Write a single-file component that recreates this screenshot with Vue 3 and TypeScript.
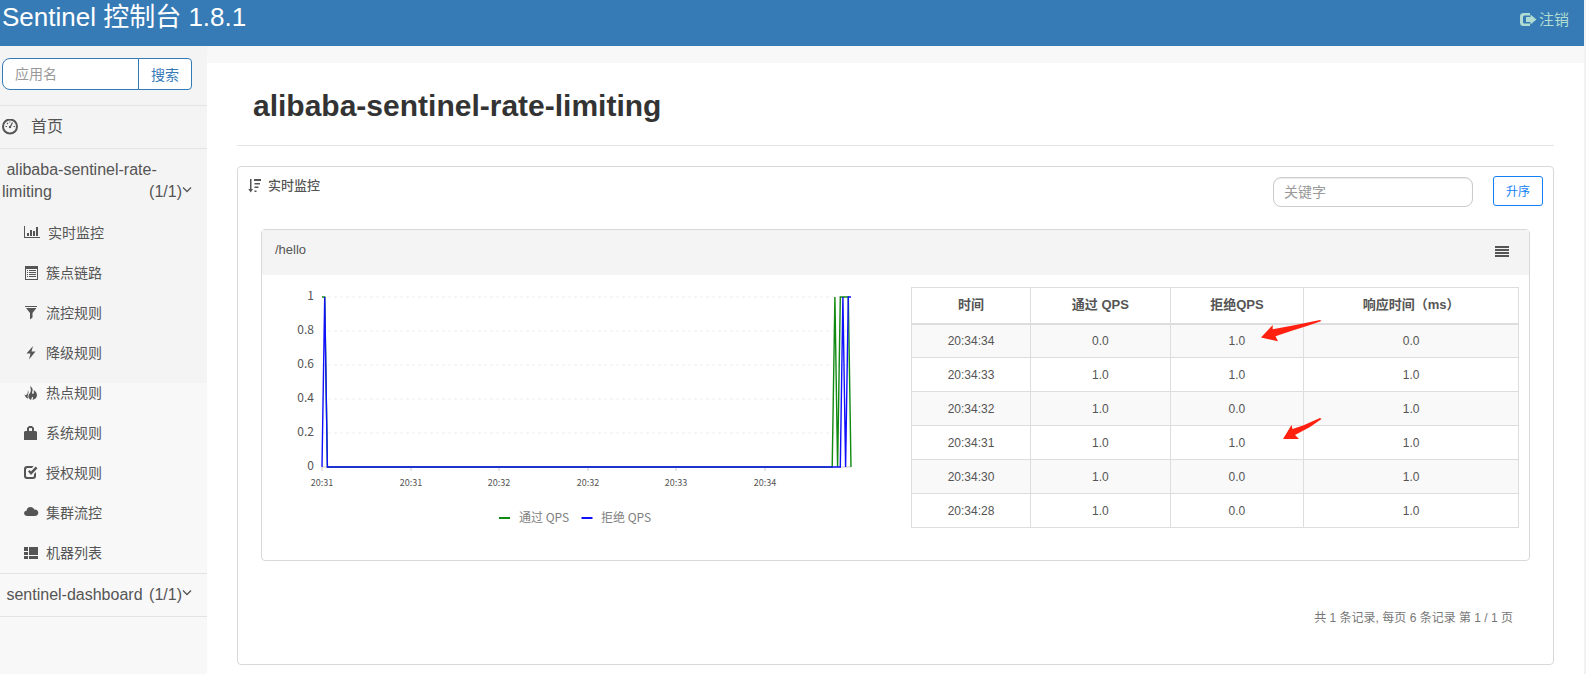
<script setup lang="ts">
import { ref } from 'vue'

interface MenuItem { label: string; icon: string; wide?: boolean }

const appFilter = ref('')
const keyword = ref('')

const menu: MenuItem[] = [
  { label: '实时监控', icon: 'M0 0h1v11h15v1H0zM3 7h2v3H3zM6 4h2v6H6zM9 5h2v5H9zM12 1h2v9h-2z', wide: true },
  { label: '簇点链路', icon: 'M1 0h13v14H1zM2 3v10h11V3zM3 4h1v1H3zM5 4h7v1H5zM3 6h1v1H3zM5 6h7v1H5zM3 8h1v1H3zM5 8h7v1H5zM3 10h1v1H3zM5 10h7v1H5z' },
  { label: '流控规则', icon: 'M1 0h12v1H1zM2 2h10.500L8.500 7v4.500L6 13.500V7z' },
  { label: '降级规则', icon: 'M9 0 2.500 7.500h4L5 13.500 11.500 5.500H7.500z' },
  { label: '热点规则', icon: 'M6 0C8.500 1.500 9.200 3.500 8.300 5.500 7.900 6.800 8.100 7.900 8.900 7.900 10 7.900 10.200 6 9.500 4c2.200 1.300 3.500 3.200 3.500 5.200 0 2.300-1.600 4-4.800 4.800 1.200-1.300 1-2.500 0-3.600C7.900 11.800 7.400 12.600 7 14 4.600 12.700 3.900 11 4.600 9.300c.6-1.500 2.200-2.700 2.200-4.800C6.900 2.800 6.600 1.400 6 0zM3.800 4c1.100 1.900.6 3.300.1 4.700-.4 1.400-.3 2.700.2 4C2.100 12 .8 10.600.5 8.300c.7 1 1.200 1.200 1.700.8C3.300 8.200 4.200 6.500 3.800 4z' },
  { label: '系统规则', icon: 'M3 5V2L5 0h3l2 2v3h2l1 1v8H0V6l1-1zM5 5h3V2.500L7.500 2h-2L5 2.500z' },
  { label: '授权规则', icon: 'M3 0h6.500L8 2H3.500Q2 2 2 3.500v6Q2 11 3.500 11h5q1.500 0 1.500-1.500V8l2-2v4q0 3-3 3H3q-3 0-3-3V3q0-3 3-3zM4 5.500l1.500-1.500L7 5.500 11.700.500 13.500 2.300 7 9z' },
  { label: '集群流控', icon: 'M3.500 10C1.200 10-.2 8.600.1 6.900.3 5.500 1.300 4.700 2.500 4.700 2.700 2.500 4.300 1 6.500 1c1.800 0 3.200 1 3.800 2.500 2.400-.3 4 1.200 4 3.200 0 1.900-1.400 3.300-3.300 3.300z' },
  { label: '机器列表', icon: 'M0 1h4v4H0zM5 1h9v8H5zM0 6h4v3H0zM0 10h4v3H0zM5 10h9v3H5z' },
]

const headers = ['时间', '通过 QPS', '拒绝QPS', '响应时间（ms）']
const rows = [
  ['20:34:34', '0.0', '1.0', '0.0'],
  ['20:34:33', '1.0', '1.0', '1.0'],
  ['20:34:32', '1.0', '0.0', '1.0'],
  ['20:34:31', '1.0', '1.0', '1.0'],
  ['20:34:30', '1.0', '0.0', '1.0'],
  ['20:34:28', '1.0', '0.0', '1.0'],
]

const plot = { left: 60, right: 589, top: 21, bottom: 191 }
const lastIndex = 197
const xAt = (i: number) => plot.left + (i * (plot.right - plot.left)) / lastIndex
const yAt = (v: number) => plot.bottom - v * (plot.bottom - plot.top)
const line = (points: number[][]) => points.map(([i, v]) => `${xAt(i).toFixed(1)},${yAt(v)}`).join(' ')

const passed = line([[0, 1], [1, 1], [2, 0], [190, 0], [191, 1], [192, 0], [193, 1], [196, 1], [197, 0]])
const blocked = line([[0, 0], [1, 1], [2, 0], [193, 0], [194, 1], [195, 0], [196, 1], [197, 1]])
const yTicks = [1, 0.8, 0.6, 0.4, 0.2, 0]
const xTicks = ['20:31', '20:31', '20:32', '20:32', '20:33', '20:34'].map((label, n) => ({ label, x: Math.round(xAt(n * 33)) }))
</script>

<template>
  <div class="page">
    <header class="topbar">
      <div class="brand">Sentinel 控制台 1.8.1</div>
      <a class="logout" href="#">
        <svg width="17" height="14" viewBox="0 0 17 14" aria-hidden="true">
          <path fill="currentColor" d="M3.500 0H10v2.500H4.500Q3 2.500 3 4v5q0 1.500 1.500 1.500H10V13H3.500Q0 13 0 9.500v-6Q0 0 3.500 0zM10.500 1.500l6 5-6 5V9H6V4h4.500z" />
        </svg>
        <span>注销</span>
      </a>
    </header>

    <div class="body">
      <nav class="sidebar">
        <form class="search" @submit.prevent>
          <input v-model="appFilter" type="text" placeholder="应用名" aria-label="应用名" />
          <button type="submit">搜索</button>
        </form>
        <a class="home" href="#">
          <svg width="17" height="16" viewBox="0 0 17 16" aria-hidden="true">
            <circle cx="8" cy="7.500" r="7" fill="none" stroke="currentColor" stroke-width="2" />
            <path d="M8 8.500 10.500 3.500M3.500 7.500h1.500M11.500 7.500h1.500M5 4l1 1M7.800 2.500v1" fill="none" stroke="currentColor" stroke-width="1.200" />
            <circle cx="8" cy="8" r="1.200" fill="currentColor" />
          </svg>
          <span>首页</span>
        </a>
        <a class="app" href="#">
          <span>&nbsp;alibaba-sentinel-rate-</span><wbr /><span>limiting</span>
          <span class="count">(1/1)<svg width="10" height="12" viewBox="0 0 10 12" aria-hidden="true"><path d="M1 2.500 5 6.500 9 2.500" fill="none" stroke="currentColor" stroke-width="1.300" /></svg></span>
        </a>
        <ul class="menu">
          <li v-for="item in menu" :key="item.label">
            <a href="#" :class="{ wide: item.wide }">
              <svg width="16" height="14" viewBox="0 0 16 14" aria-hidden="true">
                <path :d="item.icon" fill="currentColor" fill-rule="evenodd" />
              </svg>
              <span>{{ item.label }}</span>
            </a>
          </li>
        </ul>
        <a class="app ruled" href="#">
          <span>&nbsp;sentinel-dashboard</span>
          <span class="count">(1/1)<svg width="10" height="12" viewBox="0 0 10 12" aria-hidden="true"><path d="M1 2.500 5 6.500 9 2.500" fill="none" stroke="currentColor" stroke-width="1.300" /></svg></span>
        </a>
      </nav>

      <main class="main">
        <h1>alibaba-sentinel-rate-limiting</h1>
        <section class="card">
          <div class="card-head">
            <h2>
              <svg width="14" height="14" viewBox="0 0 14 14" aria-hidden="true">
                <path fill="currentColor" d="M2 0h1.500v10H5L2.700 13.500.3 10H2zM6 0h7v2H6zM6.500 4H12v1.500H6.500zM6.500 7.500h4V9h-4zM6.500 11.500h2V13h-2z" />
              </svg>
              <span>实时监控</span>
            </h2>
            <input v-model="keyword" type="text" placeholder="关键字" aria-label="关键字" />
            <button class="sort" type="button">升序</button>
          </div>

          <article class="metric">
            <div class="metric-head">
              <span>/hello</span>
              <button type="button" aria-label="菜单">
                <svg width="14" height="12" viewBox="0 0 14 12" aria-hidden="true">
                  <path fill="currentColor" d="M0 0h14v2H0zM0 3h14v2H0zM0 6h14v2H0zM0 9h14v2H0z" />
                </svg>
              </button>
            </div>
            <div class="metric-body">
              <svg class="chart" viewBox="0 0 649 284" role="img" aria-label="QPS">
                <g v-for="v in yTicks" :key="v">
                  <line v-if="v" :x1="plot.left" :x2="plot.right" :y1="yAt(v)" :y2="yAt(v)" class="grid" />
                  <text x="52" :y="yAt(v) + 3" class="ylabel">{{ v }}</text>
                </g>
                <line :x1="plot.left" :x2="plot.right" :y1="plot.bottom" :y2="plot.bottom" class="axis" />
                <g v-for="t in xTicks" :key="t.x">
                  <line :x1="t.x" :x2="t.x" y1="191" y2="195" class="axis" />
                  <text :x="t.x" y="210" class="xlabel">{{ t.label }}</text>
                </g>
                <polyline :points="passed" class="series passed" />
                <polyline :points="blocked" class="series blocked" />
                <path d="M237 242h11" class="key passed" />
                <text x="257" y="246" class="legend">通过 QPS</text>
                <path d="M319.500 242h11" class="key blocked" />
                <text x="339" y="246" class="legend">拒绝 QPS</text>
              </svg>
              <div class="table-wrap">
                <table>
                  <thead>
                    <tr><th v-for="h in headers" :key="h" scope="col">{{ h }}</th></tr>
                  </thead>
                  <tbody>
                    <tr v-for="r in rows" :key="r[0]"><td v-for="(c, n) in r" :key="n">{{ c }}</td></tr>
                  </tbody>
                </table>
                <svg class="arrow first" width="61" height="22" viewBox="0 0 61 22" aria-hidden="true">
                  <path fill="#ff2010" d="M0 17.500 11.700 5v4.200L32 5.500 59 0l1.500 1L46 6 30 11 14.500 16.300l2.500 5z" />
                </svg>
                <svg class="arrow second" width="39" height="22" viewBox="0 0 39 22" aria-hidden="true">
                  <path fill="#ff2010" d="M0 21 8.500 7l1 4L20 7.500 37 0l1.500 1L27 9 12 17l4 4z" />
                </svg>
              </div>
            </div>
          </article>
          <footer class="pager">共 1 条记录, 每页 6 条记录 第 1 / 1 页</footer>
        </section>
      </main>
    </div>
  </div>
</template>

<style>
body {
  margin: 0;
  background: #f8f8f8;
}
</style>

<style scoped>
* {
  box-sizing: border-box;
}
.page {
  display: flex;
  flex-direction: column;
  min-height: 100vh;
  border-right: 2px solid #f1f1f1;
  background: #f8f8f8;
  color: #555;
  font: 14px/20px "Liberation Sans", "Noto Sans CJK SC", sans-serif;
}
a {
  color: inherit;
  text-decoration: none;
}
input,
button {
  font-family: inherit;
}
input {
  outline: 0;
  color: #555;
}
input::placeholder {
  color: #999;
  opacity: 1;
}
.topbar {
  display: flex;
  justify-content: space-between;
  align-items: flex-start;
  height: 46px;
  padding: 0 15px 0 2px;
  background: #367bb5;
}
.brand {
  color: #fff;
  font-size: 26px;
  line-height: 34px;
}
.logout {
  display: flex;
  align-items: center;
  gap: 2px;
  color: #b0dcd2;
  font-size: 15px;
  line-height: 40px;
}
.body {
  display: flex;
  flex: 1;
}
.sidebar {
  flex: none;
  width: 207px;
  padding-top: 12px;
  background: linear-gradient(#f4f4f4 337px, #f8f8f8 337px);
}
.search {
  display: flex;
  height: 32px;
  margin: 0 15px 15px 2px;
}
.search input {
  flex: 1;
  min-width: 0;
  padding: 0 12px;
  border: 1px solid #337ab7;
  border-radius: 8px 0 0 8px;
  background: #fff;
  font-size: 14px;
}
.search button {
  width: 54px;
  margin-left: -1px;
  padding: 0;
  border: 1px solid #337ab7;
  border-radius: 0 4px 4px 0;
  background: #fff;
  color: #337ab7;
  font-size: 14px;
}
.home {
  display: flex;
  align-items: center;
  gap: 12px;
  padding: 10px 2px;
  border-top: 1px solid #e4e4e4;
  border-bottom: 1px solid #e4e4e4;
  font-size: 16px;
  line-height: 22px;
}
.app {
  display: block;
  padding: 10px 15px 10px 2px;
  font-size: 16px;
  line-height: 22px;
}
.app.ruled {
  border-top: 1px solid #e4e4e4;
  border-bottom: 1px solid #e4e4e4;
}
.count {
  float: right;
}
.menu {
  margin: 0;
  padding: 0;
  list-style: none;
}
.menu a {
  display: flex;
  align-items: center;
  gap: 6px;
  height: 40px;
  padding-left: 24px;
}
.menu a.wide {
  gap: 8px;
}
.main {
  flex: 1;
  min-width: 0;
  margin-top: 17px;
  padding: 0 30px 9px;
  background: #fff;
}
h1 {
  margin: 0 0 20px;
  padding: 23px 16px 19px;
  border-bottom: 1px solid #e4e4e4;
  color: #333;
  font-size: 30px;
  line-height: 40px;
}
.card {
  border: 1px solid #d8d8d8;
  border-radius: 4px;
}
.card-head {
  display: flex;
  align-items: flex-start;
  height: 62px;
  padding: 9px 10px;
}
h2 {
  display: flex;
  flex: 1;
  align-items: center;
  gap: 6px;
  margin: 0;
  font-size: 13px;
  font-weight: 500;
}
.card-head input {
  width: 200px;
  height: 30px;
  margin: 1px 20px 0 0;
  padding: 0 10px;
  border: 1px solid #ccc;
  border-radius: 8px;
  box-shadow: inset 0 1px 1px rgba(0, 0, 0, 0.08);
  font-size: 14px;
}
.sort {
  width: 50px;
  height: 30px;
  padding: 0 0 2px;
  border: 1px solid #1280f5;
  border-radius: 3px;
  background: #fff;
  color: #1280f5;
  font-size: 12px;
}
.metric {
  margin: 0 23px;
  border: 1px solid #d8d8d8;
  border-radius: 4px;
}
.metric-head {
  display: flex;
  justify-content: space-between;
  align-items: center;
  height: 45px;
  padding: 0 20px 6px 13px;
  background: #f4f4f4;
  font-size: 13px;
}
.metric-head button {
  display: flex;
  padding: 4px 0 0;
  border: 0;
  background: none;
  color: #555;
}
.metric-body {
  display: grid;
  grid-template-columns: 649fr 608fr;
  padding: 1px 10px 0 0;
}
.chart {
  display: block;
  width: 100%;
  font-family: "Noto Sans CJK SC", sans-serif;
}
.grid {
  stroke: #eee;
  stroke-dasharray: 3 3;
}
.axis {
  stroke: #ccc;
}
.ylabel {
  fill: #545454;
  font-size: 12px;
  text-anchor: end;
}
.xlabel {
  fill: #545454;
  font-size: 9px;
  text-anchor: middle;
}
.legend {
  fill: #808080;
  font-size: 12px;
}
.series {
  fill: none;
  stroke-width: 1.4;
}
.key {
  stroke-width: 2;
}
.passed {
  stroke: #108a10;
}
.blocked {
  stroke: #1010ff;
}
.table-wrap {
  position: relative;
  padding-top: 11px;
}
table {
  width: 100%;
  border-collapse: collapse;
  table-layout: fixed;
  font-size: 12px;
  text-align: center;
}
th,
td {
  height: 34px;
  padding: 0;
  border: 1px solid #ddd;
}
th {
  height: 36px;
  border-bottom-width: 2px;
  font-size: 13px;
}
th:nth-child(1) {
  width: 119px;
}
th:nth-child(2) {
  width: 23%;
}
th:nth-child(3) {
  width: 22%;
}
tbody tr:nth-child(odd) {
  background: #f9f9f9;
}
.arrow {
  position: absolute;
}
.arrow.first {
  top: 44px;
  left: 350px;
}
.arrow.second {
  top: 142px;
  left: 372px;
}
.pager {
  padding: 47px 40px 36px;
  color: #777;
  font-size: 12px;
  text-align: right;
}
</style>
